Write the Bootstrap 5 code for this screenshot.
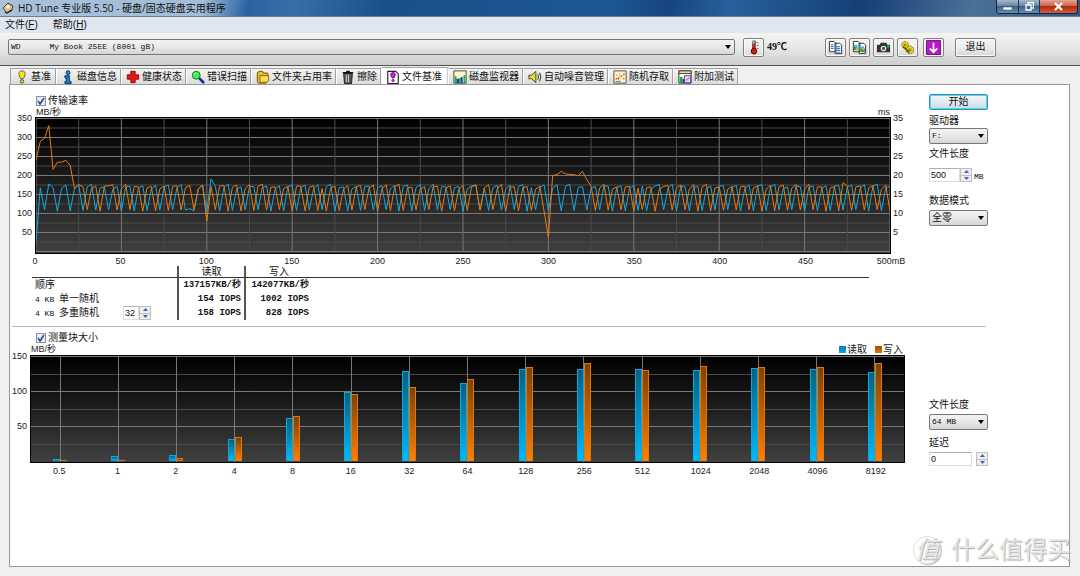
<!DOCTYPE html>
<html lang="zh-CN">
<head>
<meta charset="utf-8">
<meta name="viewport" content="width=device-width, initial-scale=1">
<title>HD Tune 专业版 5.50</title>
<link href="https://cdn.jsdelivr.net/npm/bootstrap@5.3.0/dist/css/bootstrap.min.css" rel="stylesheet">
<style>
body{font:10px/14px "Liberation Sans","Noto Sans CJK SC",sans-serif;color:#111;background:#f0f0f0}
button,input,select{font:inherit;color:inherit}
.mono{font-family:"Liberation Mono","Noto Sans CJK SC",monospace;font-size:8px}
.titlebar{height:17px;padding-left:2px;border-bottom:1px solid #6d7f95;font-family:"Open Sans","Noto Sans CJK SC",sans-serif;
 background:linear-gradient(100deg,#a9c1da 0,#a3bdd8 200px,#2a62a0 245px,#3a6ea8 290px,#1b4f8a 380px,#1d5795 600px,#17457f 660px,#27609c 720px,#153f76 850px,#4a7298 960px,#31597f 100%)}
.winbtns{height:14px;border:1px solid #14263c;border-top:0;border-radius:0 0 4px 4px;overflow:hidden;margin-right:2px}
.winbtns button{width:21px;border:0;padding:0;display:flex;align-items:center;justify-content:center;background:linear-gradient(#a7bace,#6884a3 45%,#3f6085 50%,#6d8cac)}
.winbtns button+button{border-left:1px solid #22384f}
.winbtns .shut{width:38px;background:linear-gradient(#e3a596,#cf6149 45%,#b02a10 50%,#d35c3c)}
.menubar{height:16px;padding-left:5px;gap:15px;background:#dfe6ef}
.menubar a{color:#111;text-decoration:none;line-height:16px}
.toolbar{height:33px;padding:4px 84px 8px 8px;background:linear-gradient(#f4f4f4,#e6e6e6 50%,#cdcdcd);border-bottom:1px solid #555}
.combo{appearance:none;border:1px solid #777;border-radius:2px;height:16px;line-height:14px;padding:0 12px 0 2px;width:100%;
 background:url("data:image/svg+xml,%3Csvg xmlns='http://www.w3.org/2000/svg' width='6' height='4'%3E%3Cpath d='M0 0h6L3 4z'/%3E%3C/svg%3E") right 3px center no-repeat,linear-gradient(#f3f3f3,#e8e8e8 50%,#d6d6d6)}
.toolbtn{width:21px;height:19px;padding:0;border:1px solid #808080;border-radius:2px;background:linear-gradient(#f5f5f5,#ececec 50%,#d8d8d8);display:flex;align-items:center;justify-content:center;box-shadow:inset 0 0 0 1px #fafafa}
.toolbtn svg{width:15px;height:15px}
.toolbtn.exit{width:41px}
.temp{font:bold 10px/14px "Liberation Serif","Noto Sans CJK SC",serif;margin:0 38px 0 3px;width:20px;white-space:nowrap}
.tabs{height:18px;margin:0 0 0 10px}
.tabs button{height:16px;line-height:14px;border:1px solid #a0a0a0;border-left-color:#fff;border-bottom:0;padding:0 3px 0 4px;gap:2px;background:linear-gradient(#f4f4f4,#dcdcdc);display:flex;align-items:center;white-space:nowrap}
.tabs button:first-child{border-left-color:#a0a0a0;padding-right:4px}
.tabs button.active{height:18px;background:#fff;border-right-color:#ccc;margin-bottom:-1px;padding-right:5px;position:relative}
.tabs svg{width:14px;height:14px}
.panel{background:#fff;border:1px solid #999;margin:0 10px 9px 9px;position:relative}
.side{width:140px}
.side .combo,.side .start{width:59px}
.start{height:16px;line-height:12px;border:1px solid #2e8fb8;border-radius:2px;padding:0;background:linear-gradient(#f2f6f8,#e2ebef 50%,#c3dbe4);box-shadow:inset 0 0 0 1px #5fd0f2}
.cap{height:14px;line-height:14px;display:block;white-space:nowrap}
.check{appearance:none;width:10px;height:10px;border:1px solid #8a93a0;margin:0;background:#eef1f5}
.check:checked{background:#e8edf5 url("data:image/svg+xml,%3Csvg xmlns='http://www.w3.org/2000/svg' width='8' height='8'%3E%3Cpath d='M1 4l2 3L7 1' fill='none' stroke='%232a4aa0' stroke-width='1.6'/%3E%3C/svg%3E")}
.num{border:1px solid #ddd;border-top-color:#b0b0b0;height:14px;font-size:9px;line-height:12px;padding:0 1px;background:#fff;min-width:0}
.spin{width:12px;height:14px;display:flex;flex-direction:column;border:1px solid #c0c0c0;background:#eee}
.spin button{flex:1;border:0;padding:0;background:none;display:flex;align-items:center;justify-content:center}
.spin button+button{border-top:1px solid #c0c0c0}
.spin svg{width:5px;height:3px}
.axis{font-size:9px;line-height:12px;color:#222}
.chart1{display:grid;grid-template-columns:25px 1fr 38px}
.chart2{display:grid;grid-template-columns:20px 1fr 24px}
.plot{display:block;width:100%;background:linear-gradient(#000,#1b1b1b 45%,#404040);border:1px solid #000}
.chart1 .plot{height:137px}
.chart2 .plot{height:108px;position:relative}
.yaxis{margin-top:-8px;text-align:right;padding-right:3px}
.yaxis.right{text-align:left;padding:0 0 0 2px}
.yaxis span{display:block;height:19px;line-height:19px}
.chart2 .yaxis{margin-top:-16px}
.chart2 .yaxis span{height:35px;line-height:35px}
.xaxis1{grid-column:2;display:grid;grid-template-columns:repeat(11,1fr);margin:2px -5% 0;text-align:center;line-height:10px;height:10px}
.xaxis2{grid-column:2;display:grid;grid-template-columns:repeat(15,1fr);margin-top:2px;text-align:center}
.series{fill:none;stroke-width:1;vector-effect:non-scaling-stroke}
.gl{vector-effect:non-scaling-stroke;shape-rendering:crispEdges;stroke:#4a4a4a}
.gl.major{stroke:#787878}
.bars{position:absolute;inset:0 0 1px 0;display:grid;grid-template-columns:repeat(15,1fr)}
.bars>div{display:flex;justify-content:center;align-items:flex-end}
.bar{width:7px}
.rd{background:linear-gradient(#08607f,#00baff);border:1px solid #0aa8e0;border-bottom:0}
.wr{background:linear-gradient(#7d4204,#ff8000);border:1px solid #e87408;border-bottom:0}
.swatch{width:7px;height:7px;margin-right:1px;background:linear-gradient(#0a7bb0,#0aa8e8)}
.swatch.orange{background:linear-gradient(#9c5000,#e87408)}
.results{margin:0 60px 0 22px;width:calc(100% - 82px);border-collapse:separate;border-spacing:0;table-layout:fixed;line-height:14px}
.results td,.results th{padding:0;height:14px;line-height:14px;font-weight:400;white-space:nowrap}
.results thead th{height:12px;line-height:11px;text-align:center;border-bottom:1px solid #333}
.results tr>:nth-child(2),.results tr>:nth-child(3){border-left:2px solid #555}
.results tbody td{font:bold 9px/14px "Liberation Mono","Noto Sans CJK SC",monospace;text-align:right;padding-right:3px}
.results tbody th>div{padding-left:3px;height:14px}
.divider{margin:0 83px 0 2px;border-top:1px solid #b8b8b8}
.wmark{position:absolute;right:0;bottom:0;font-size:24px;line-height:32px;color:#e6e6e6;text-shadow:1px 1px 1px #aaa;pointer-events:none;gap:10px;margin-right:-2px}
.wmark .ring{width:28px;height:28px;border-radius:50%;border:1px solid #e2e2e2;box-shadow:1px 1px 1px #bbb;line-height:26px;text-align:center;font-style:italic}
</style>
</head>
<body class="min-vh-100 d-flex flex-column overflow-hidden">
<header class="titlebar d-flex align-items-center">
 <svg width="12" height="12" viewBox="0 0 12 12" class="me-1"><path d="M1 6l5-5 5 3-1 4-5 3z" fill="#e8c890" stroke="#4a3a28"/><circle cx="6" cy="5" r="2.4" fill="#fff4d8" stroke="#a88850" stroke-width=".6"/><path d="M3 10l2 1 5-3" stroke="#333" stroke-width="1.5" fill="none"/></svg>
 <span>HD Tune 专业版 5.50 - 硬盘/固态硬盘实用程序</span>
 <div class="winbtns d-flex ms-auto align-self-start">
  <button aria-label="最小化"><svg width="9" height="9"><path d="M0 5h9v3H0z" fill="#fff" stroke="#345" stroke-width=".5"/></svg></button>
  <button aria-label="还原"><svg width="9" height="9" fill="none" stroke="#fff"><path d="M3 2.500V.5h5.500v5.500h-2M1 3h5v5H1z" stroke-width="1.300"/></svg></button>
  <button class="shut" aria-label="关闭"><svg width="9" height="9"><path d="M1 1l7 7M8 1l-7 7" stroke="#fff" stroke-width="2.200"/></svg></button>
 </div>
</header>
<nav class="menubar d-flex"><a href="#">文件(<u>F</u>)</a><a href="#">帮助(<u>H</u>)</a></nav>
<div class="toolbar d-flex align-items-center">
 <select class="combo mono flex-grow-1" aria-label="磁盘"><option>WD&nbsp;&nbsp;&nbsp;&nbsp;&nbsp;&nbsp;My Book 25EE (8001 gB)</option></select>
 <button class="toolbtn ms-2 flex-shrink-0" aria-label="温度"><svg viewBox="0 0 16 16"><path d="M7 1h3v9h-3z" fill="#e02010" stroke="#333" stroke-width=".7"/><circle cx="8.500" cy="12" r="3" fill="#e81808" stroke="#500"/><path d="M7 1h2v3H7z" fill="#60d8f0"/><path d="M11.500 3h2M11.500 6h2M11.500 9h2" stroke="#666"/></svg></button>
 <span class="temp">49℃</span>
 <div class="d-flex flex-shrink-0" style="gap:3px">
  <button class="toolbtn" aria-label="复制文本"><svg viewBox="0 0 16 16"><path d="M1.500 1.500h5l2 2v9h-7zM7.500 3.500h5l2 2v9h-7z" fill="#fff" stroke="#333"/><path d="M3 5h3M3 7h3M3 9h3M9 7h4M9 9h4M9 11h4M9 13h4" stroke="#2c7ee0" stroke-width="1.200"/></svg></button>
  <button class="toolbtn" aria-label="复制图像"><svg viewBox="0 0 16 16"><path d="M1.500 1.500h5l2 2v9h-7zM7.500 3.500h5l2 2v9h-7z" fill="#fff" stroke="#333"/><path d="M2 7h4v4H2zM9 9h5v4H9z" fill="#28a048"/><path d="M2 5h4v2H2zM9 7h4v2H9z" fill="#30b8f0"/><path d="M4 8h2v3H4zM11 9h2v2h-2z" fill="#f0b020"/></svg></button>
  <button class="toolbtn" aria-label="截图"><svg viewBox="0 0 16 16"><path d="M1 5h3l1-2h6l1 2h3v8H1z" fill="#333"/><circle cx="8" cy="9" r="3" fill="#eee"/><circle cx="8" cy="9" r="1.800" fill="#555"/><path d="M12 6h2v2h-2z" fill="#20e040"/></svg></button>
  <button class="toolbtn" aria-label="选项"><svg viewBox="0 0 16 16" fill="#e8d820" stroke="#706000"><circle cx="5.500" cy="5" r="3.500" stroke-dasharray="2 1"/><circle cx="10.500" cy="10.500" r="4" stroke-dasharray="2 1"/><path d="M3 7l7 6" stroke-width="2"/><circle cx="5.500" cy="5" r="1" fill="#fff"/><circle cx="10.500" cy="10.500" r="1.200" fill="#fff"/></svg></button>
  <button class="toolbtn" style="margin-left:2px" aria-label="最小化到托盘"><svg viewBox="0 0 16 16"><path d="M.5.5h15v15H.5z" fill="#bb18c8" stroke="#70107c"/><path d="M8 3v10M4 9l4 4 4-4" stroke="#fff" stroke-width="1.800" fill="none"/></svg></button>
  <button class="toolbtn exit ms-2">退出</button>
 </div>
</div>
<div class="tabs d-flex align-items-end" role="tablist">
 <button role="tab"><svg viewBox="0 0 16 16"><path d="M8 1c5 0 4 5 1.500 9h-3C4 6 3 1 8 1z" fill="#f4e410" stroke="#555"/><circle cx="8" cy="13" r="2" fill="#f4e410" stroke="#444"/></svg>基准</button>
 <button role="tab"><svg viewBox="0 0 16 16"><circle cx="8" cy="3" r="2.200" fill="#1898f8" stroke="#024"/><path d="M4.500 6.500h5V13h2v2.500h-7V13h1.500V9H4.500z" fill="#1080f0" stroke="#024"/></svg>磁盘信息</button>
 <button role="tab"><svg viewBox="0 0 16 16"><path d="M5.500 1.500h5v4h4v5h-4v4h-5v-4h-4v-5h4z" fill="#e81818" stroke="#800"/></svg>健康状态</button>
 <button role="tab"><svg viewBox="0 0 16 16"><path d="M9 9l5 5" stroke="#1030a0" stroke-width="3" stroke-linecap="round"/><circle cx="6" cy="6" r="4.500" fill="#40f050" stroke="#156020"/><path d="M3.500 5l2-2" stroke="#fff"/></svg>错误扫描</button>
 <button role="tab"><svg viewBox="0 0 16 16"><path d="M1.500 13V3l2-1.500h4l1 2h5V13l-2 2h-9z" fill="#e8c020" stroke="#604800"/><path d="M4.500 6.500h10V12l-2 2h-8z" fill="#f8e058" stroke="#806000"/></svg>文件夹占用率</button>
 <button role="tab"><svg viewBox="0 0 16 16"><path d="M3 4h10l-1 11.500H4z" fill="#555" stroke="#111"/><path d="M2 3h12M6 1.500h4" stroke="#111" stroke-width="1.500"/><path d="M6 5v9M8.500 5v9" stroke="#ccc" stroke-width="1.200"/></svg>擦除</button>
 <button role="tab" class="active" aria-selected="true"><svg viewBox="0 0 16 16"><path d="M2 1.500h9l3 3v11H2z" fill="#fff" stroke="#222" stroke-width="1.300"/><path d="M8 3c3.500 0 3 3 1 6H7C5 6 4.500 3 8 3z" fill="#d020e0" stroke="#506"/><circle cx="8" cy="12" r="1.500" fill="#d020e0" stroke="#506" stroke-width=".6"/></svg>文件基准</button>
 <button role="tab"><svg viewBox="0 0 16 16"><path d="M1 1h14v14H1z" fill="#fff8c8" stroke="#333"/><path d="M2 7h2v8H2zM7 9h2v6H7zM12 6h2v9h-2z" fill="#10b830"/><path d="M4 10h3v5H4zM9 8h2v7H9z" fill="#1838d0"/></svg>磁盘监视器</button>
 <button role="tab"><svg viewBox="0 0 16 16"><path d="M1 6h3l5-4.500v13L4 10H1z" fill="#f0dc18" stroke="#333"/><path d="M11 5q2 3 0 6M13 3q3 5 0 10" stroke="#554" fill="none" stroke-width="1.300"/></svg>自动噪音管理</button>
 <button role="tab"><svg viewBox="0 0 16 16"><path d="M1 1h14v14H1z" fill="#fff4c0" stroke="#444"/><path d="M3 11l2-2M6 11l1-3M9 8l1-2M12 6l1-2" stroke="#e05020" stroke-width="1.500"/><path d="M4 6h1M7 5h1M11 10h2M3 13h6" stroke="#3868e0"/></svg>随机存取</button>
 <button role="tab"><svg viewBox="0 0 16 16"><path d="M1 1h14v14H1z" fill="#fff" stroke="#222"/><path d="M1 1h14v3H1z" fill="#e8e090" stroke="#333"/><path d="M2 8h3v7H2z" fill="#10b830"/><path d="M5 10h2v5H5z" fill="#1838d0"/><path d="M7.500 6.500h7v8h-7z" fill="#f8d0f0" stroke="#3040a0"/><path d="M9 12l4-3" stroke="#e02020"/></svg>附加测试</button>
</div>
<main class="panel flex-grow-1">
 <section class="d-flex">
  <div class="flex-grow-1">
   <label class="d-flex align-items-center" style="gap:2px;height:13px;margin:9px 0 0 26px"><input type="checkbox" class="check" checked>传输速率</label>
   <div class="axis d-flex justify-content-between" style="height:10px;line-height:10px;margin:0 39px 0 26px"><span>MB/秒</span><span>ms</span></div>
   <div class="chart1 axis">
    <div class="yaxis"><span>350</span><span>300</span><span>250</span><span>200</span><span>150</span><span>100</span><span>50</span></div>
    <svg class="plot" id="rate" viewBox="0 0 500 135" preserveAspectRatio="none" role="img" aria-label="传输速率"></svg>
    <div class="yaxis right"><span>35</span><span>30</span><span>25</span><span>20</span><span>15</span><span>10</span><span>5</span></div>
    <div class="xaxis1"><span>0</span><span>50</span><span>100</span><span>150</span><span>200</span><span>250</span><span>300</span><span>350</span><span>400</span><span>450</span><span>500mB</span></div>
   </div>
   <table class="results">
    <colgroup><col style="width:145px"><col style="width:67px"><col style="width:68px"><col></colgroup>
    <thead><tr><th></th><th>读取</th><th>写入</th><th></th></tr></thead>
    <tbody>
     <tr><th><div>顺序</div></th><td>137157KB/秒</td><td>142077KB/秒</td><td></td></tr>
     <tr><th><div><span class="mono">4 KB </span>单一随机</div></th><td>154 IOPS</td><td>1002 IOPS</td><td></td></tr>
     <tr><th><div class="d-flex align-items-center"><label for="depth"><span class="mono">4 KB </span>多重随机</label>
      <input class="num ms-4" id="depth" style="width:16px" value="32"><span class="spin"><button aria-label="增加"><svg viewBox="0 0 5 3"><path d="M0 3h5L2.500 0z" fill="#4060c0"/></svg></button><button aria-label="减少"><svg viewBox="0 0 5 3"><path d="M0 0h5L2.500 3z" fill="#4060c0"/></svg></button></span></div></th><td>158 IOPS</td><td>828 IOPS</td><td></td></tr>
    </tbody>
   </table>
  </div>
  <div class="side flex-shrink-0" style="padding-top:9px">
   <button class="start d-block">开始</button>
   <label class="cap" for="drv" style="margin-top:4px">驱动器</label>
   <select class="combo mono d-block" id="drv"><option>F:</option></select>
   <label class="cap" for="len" style="margin-top:3px">文件长度</label>
   <div class="d-flex align-items-center" style="margin-top:5px"><input class="num" id="len" style="width:31px" value="500"><span class="spin"><button aria-label="增加"><svg viewBox="0 0 5 3"><path d="M0 3h5L2.500 0z" fill="#4060c0"/></svg></button><button aria-label="减少"><svg viewBox="0 0 5 3"><path d="M0 0h5L2.500 3z" fill="#4060c0"/></svg></button></span><span class="mono pt-1" style="padding-left:2px">MB</span></div>
   <label class="cap" for="mode" style="margin-top:10px">数据模式</label>
   <select class="combo d-block" id="mode" style="margin-top:2px"><option>全零</option></select>
  </div>
 </section>
 <div class="divider" style="margin-top:6px"></div>
 <section class="d-flex">
  <div class="flex-grow-1">
   <label class="d-flex align-items-center" style="gap:2px;height:13px;margin:4px 0 0 26px"><input type="checkbox" class="check" checked>测量块大小</label>
   <div class="axis d-flex justify-content-between" style="height:11px;line-height:11px;margin:0 26px 0 21px"><span>MB/秒</span>
    <span class="d-flex align-items-center" style="font-size:10px"><i class="swatch"></i>读取<i class="swatch orange ms-2"></i>写入</span></div>
   <div class="chart2 axis">
    <div class="yaxis"><span>150</span><span>100</span><span>50</span></div>
    <div class="plot"><svg id="blockgrid" class="d-block w-100 h-100" viewBox="0 0 15 106" preserveAspectRatio="none"></svg><div class="bars" id="bars"></div></div>
    <div></div>
    <div class="xaxis2" id="sizes"></div>
   </div>
  </div>
  <div class="side flex-shrink-0" style="padding-top:71px">
   <label class="cap" for="blen">文件长度</label>
   <select class="combo mono d-block" id="blen" style="margin-top:2px"><option>64 MB</option></select>
   <label class="cap" for="delay" style="margin-top:6px">延迟</label>
   <div class="d-flex" style="gap:4px;margin-top:2px"><input class="num" id="delay" style="width:43px" value="0"><span class="spin"><button aria-label="增加"><svg viewBox="0 0 5 3"><path d="M0 3h5L2.500 0z" fill="#4060c0"/></svg></button><button aria-label="减少"><svg viewBox="0 0 5 3"><path d="M0 0h5L2.500 3z" fill="#4060c0"/></svg></button></span></div>
  </div>
 </section>
 <div class="wmark d-flex align-items-center"><span class="ring">值</span><span>什么值得买</span></div>
</main>
<script>
const line=(x1,y1,x2,y2,major)=>`<line class="gl${major?' major':''}" x1="${x1}" y1="${y1}" x2="${x2}" y2="${y2}"/>`;
// Speeds are sampled every 2.5 MB: bursts near 170 MB/s with dips to about 108 at the listed samples.
function samples(dips,special){
  const out=[];
  for(let i=0;i<=200;i++){
    let v=dips.includes(i)?106+(i*7%5):(dips.includes(i-1)?164+(i*5%9):170+(i*11%8));
    if(i in special)v=special[i];
    out.push(v);
  }
  return out;
}
const read=samples([2,5,8,11,14,17,20,23,26,29,32,35,36,37,40,43,46,49,52,55,58,61,64,67,70,73,76,79,82,85,88,91,94,97,100,104,106,109,112,115,117,120,123,126,129,132,135,138,141,143,147,150,153,156,159,162,165,168,171,174,177,180,183,186,189,192,195,198],
 {0:23,1:168,3:178,4:168,35:109,36:113,37:107,41:191,42:172});
const write=samples([12,15,19,22,25,28,31,34,37,40,42,45,48,51,54,57,60,63,66,68,71,74,77,80,83,86,89,92,95,98,101,104,107,110,113,116,120,131,134,137,140,142,145,149,152,155,158,161,164,167,170,173,176,179,182,185,188,191,194,197,200],
 {0:240,1:290,2:298,3:331,4:216,5:235,6:235,7:240,8:227,9:166,10:176,11:170,40:80,119:105,120:37,121:200,122:202,123:211,124:204,125:203,126:202,127:199,128:211,129:189,130:172,189:181});
const pts=a=>a.map((v,i)=>`${i*2.5},${(133.5-v*.38).toFixed(1)}`).join(' ');
let g='';
for(let i=0;i<15;i++)g+=line(0,.5+i*9.5,500,.5+i*9.5,i%2==0);
for(let x=0;x<=500;x+=25)g+=line(x,0,x,133,x%50==0);
g+=`<polyline class="series" stroke="#18a8dc" points="${pts(read)}"/><polyline class="series" stroke="#e87a10" points="${pts(write)}"/>`;
document.getElementById('rate').innerHTML=g;

const blocks=[['0.5',3,1],['1',7,1],['2',9,4],['4',31,34],['8',61,64],['16',99,96],['32',129,106],['64',111,117],['128',132,134],['256',132,140],['512',132,130],['1024',130,136],['2048',133,134],['4096',132,135],['8192',127,140]];
let b='';
for(let i=0;i<6;i++)b+=line(0,.5+i*17.5,15,.5+i*17.5,i%2==0);
blocks.forEach((_,i)=>b+=line(i+.5,0,i+.5,106,true));
document.getElementById('blockgrid').innerHTML=b;
const h=v=>(v/150*100).toFixed(1);
document.getElementById('bars').innerHTML=blocks.map(r=>`<div><span class="bar rd" style="height:${h(r[1])}%"></span><span class="bar wr" style="height:${h(r[2])}%"></span></div>`).join('');
document.getElementById('sizes').innerHTML=blocks.map(r=>`<span>${r[0]}</span>`).join('');
</script>
<script src="https://cdn.jsdelivr.net/npm/bootstrap@5.3.0/dist/js/bootstrap.bundle.min.js"></script>
</body>
</html>
